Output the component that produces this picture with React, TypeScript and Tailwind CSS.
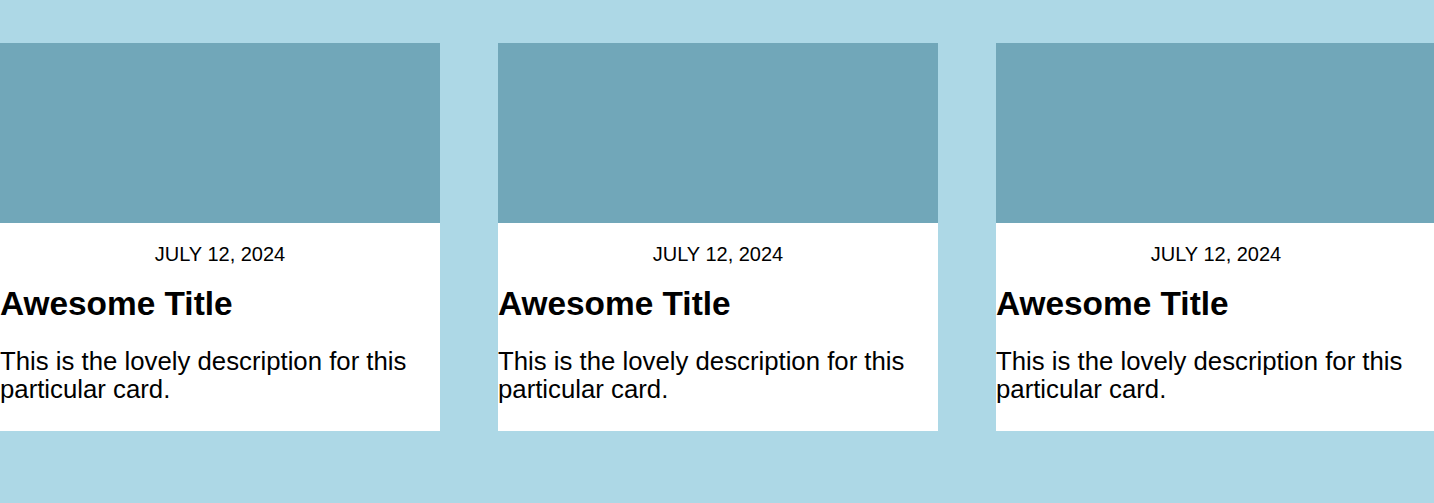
const cards = [1, 2, 3].map((id) => ({
  id,
  date: "July 12, 2024",
  title: "Awesome Title",
  description: "This is the lovely description for this particular card.",
}));

function Card({ date, title, description }: { date: string; title: string; description: string }) {
  return (
    <div className="w-[440px] shrink-0 bg-white flex flex-col">
      <div className="h-[180px] bg-[#71a7b9]" />
      <div className="pb-[28px] text-black">
        <p className="mt-[19px] text-center text-[20px] leading-[24px] uppercase">{date}</p>
        <h2 className="mt-[18px] text-[33.4px] leading-[40px] font-bold">{title}</h2>
        <p className="mt-[23px] text-[25.75px] leading-[28px]">{description}</p>
      </div>
    </div>
  );
}

export default function App() {
  return (
    <main
      className="min-h-[503px] w-full bg-[#add8e6] pt-[43px] overflow-hidden"
      style={{ fontFamily: '"Liberation Sans", Arial, sans-serif' }}
    >
      <div className="flex gap-[58px] items-start">
        {cards.map((c) => (
          <Card key={c.id} {...c} />
        ))}
      </div>
    </main>
  );
}
